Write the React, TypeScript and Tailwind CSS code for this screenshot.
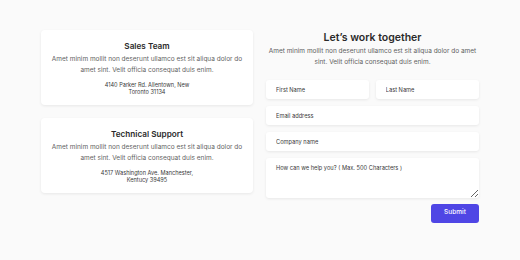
import React from 'react';

const font = { fontFamily: 'Inter, "Noto Sans", sans-serif' };

function InfoCard({ title, address }: { title: string; address: string[] }) {
  return (
    <div className="bg-white rounded-[4px] shadow-[0_1px_3px_rgba(0,0,0,0.08)] pt-[10px] pb-[9.5px] px-[10px] text-center">
      <h3 className="text-[8.2px] leading-[12px] font-semibold text-[#2a2a2a] mb-[1.5px]">{title}</h3>
      <p className="text-[6.5px] leading-[11px] text-[#5f5f5f]">
        Amet minim mollit non deserunt ullamco est sit aliqua dolor do amet sint. Velit officia consequat duis enim.
      </p>
      <p className="mt-[6px] text-[5.6px] leading-[7px] text-[#3a3a3a]">
        {address[0]}
        <br />
        {address[1]}
      </p>
    </div>
  );
}

function Field({ placeholder }: { placeholder: string }) {
  return (
    <input
      placeholder={placeholder}
      className="w-full h-[19.5px] bg-white rounded-[3px] shadow-[0_1px_3px_rgba(0,0,0,0.08)] px-[10px] text-[5.7px] outline-none placeholder:text-[#3a3a3a]"
    />
  );
}

export default function App() {
  return (
    <div className="w-[520px] h-[260px] bg-[#fafafa] flex gap-[13px] px-[41px] pt-[30px] antialiased" style={font}>
      <div className="w-[212px] flex flex-col gap-[13px]">
        <InfoCard title="Sales Team" address={['4140 Parker Rd. Allentown, New', 'Toronto 31134']} />
        <InfoCard title="Technical Support" address={['4517 Washington Ave. Manchester,', 'Kentucy 39495']} />
      </div>
      <div className="w-[213px] flex flex-col">
        <h2 className="text-center text-[10.5px] leading-[15px] font-semibold text-[#2a2a2a]">Let’s work together</h2>
        <p className="text-center text-[6.5px] leading-[11px] text-[#5f5f5f] mt-[1px]">
          Amet minim mollit non deserunt ullamco est sit aliqua dolor do amet sint. Velit officia consequat duis enim.
        </p>
        <div className="mt-[11.5px] flex flex-col gap-[6.5px]">
          <div className="flex gap-[6.5px]">
            <Field placeholder="First Name" />
            <Field placeholder="Last Name" />
          </div>
          <Field placeholder="Email address" />
          <Field placeholder="Company name" />
          <textarea
            placeholder="How can we help you? ( Max. 500 Characters )"
            className="w-full h-[40px] bg-white rounded-[3px] shadow-[0_1px_3px_rgba(0,0,0,0.08)] px-[10px] pt-[6px] text-[5.7px] outline-none placeholder:text-[#3a3a3a]"
          />
        </div>
        <div className="flex justify-end mt-[6px]">
          <button className="w-[48px] h-[19.5px] rounded-[3px] bg-[#4f46e5] text-white text-[6.5px] font-medium">Submit</button>
        </div>
      </div>
    </div>
  );
}
